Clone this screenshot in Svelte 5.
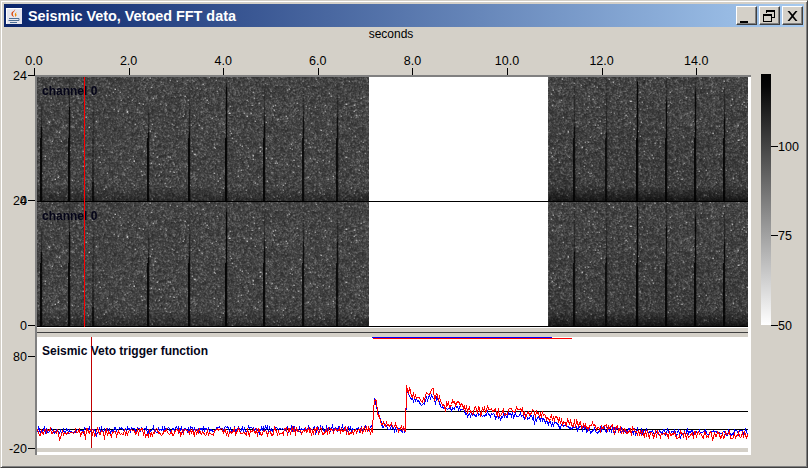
<script lang="ts">
	import { onMount } from 'svelte';

	const PLOT_W = 711;
	const PANEL_H = 124;

	let topCanvas: HTMLCanvasElement;
	let bottomCanvas: HTMLCanvasElement;

	const xTicks = ['0.0', '2.0', '4.0', '6.0', '8.0', '10.0', '12.0', '14.0'];
	const yTicks = [
		{ y: 0, label: '24' },
		{ y: 125, label: '24' },
		{ y: 125, label: '0' },
		{ y: 250, label: '0' },
		{ y: 281, label: '80' },
		{ y: 373, label: '-20' }
	];
	const barTicks = [
		{ y: 72, label: '100' },
		{ y: 161, label: '75' },
		{ y: 251, label: '50' }
	];

	// vetoed stretch of the spectrogram, in canvas pixels
	const GAP_FROM = 332;
	const GAP_TO = 511;

	// glitches: x on the page, row they fade in, row they turn solid, how dark
	const glitches = [
		[41, 30, 50, 0.85], [69, 0, 30, 0.85], [93, 25, 105, 0.75], [148, 30, 55, 0.85],
		[189, 10, 55, 0.85], [226, 0, 10, 0.9], [264, 10, 45, 0.85], [303, 5, 40, 0.8],
		[337, 10, 40, 0.8], [574, 0, 50, 0.8], [606, 0, 55, 0.75], [637, 0, 5, 0.9],
		[666, 0, 25, 0.85], [695, 0, 15, 0.85], [724, 10, 40, 0.85]
	];

	function rng(seed: number) {
		return () => {
			seed = (seed + 0x6d2b79f5) | 0;
			let t = Math.imul(seed ^ (seed >>> 15), 1 | seed);
			t = (t + Math.imul(t ^ (t >>> 7), 61 | t)) ^ t;
			return ((t ^ (t >>> 14)) >>> 0) / 4294967296;
		};
	}

	function drawSpectrum(canvas: HTMLCanvasElement) {
		const ctx = canvas.getContext('2d')!;
		const img = ctx.createImageData(PLOT_W, PANEL_H);
		const rand = rng(1207);
		const raw = new Float32Array((PLOT_W + 1) * (PANEL_H + 1));
		for (let i = 0; i < raw.length; i++) {
			const e = -Math.log(rand() + 0.0001) - Math.log(rand() + 0.0001);
			raw[i] = 38 + e * 16 + (rand() < 0.005 ? 170 : 0);
		}
		const stride = PLOT_W + 1;
		for (let y = 0; y < PANEL_H; y++) {
			for (let x = 0; x < PLOT_W; x++) {
				let v = 255;
				if (x < GAP_FROM || x >= GAP_TO) {
					const at = y * stride + x;
					v = raw[at] * 0.5 + raw[at + 1] * 0.2 + raw[at + stride] * 0.2 + raw[at + stride + 1] * 0.1;
					// low frequencies get dark at the foot of the panel
					const foot = Math.max(0, (y - PANEL_H + 16) / 16);
					v *= 1 - foot * (x > GAP_TO ? 0.65 : 0.4);
					if (x > GAP_TO) v *= 1 - (y / PANEL_H) * 0.12;
					for (const [gx, from, solid, dark] of glitches) {
						const d = x + 37 - gx;
						if (d < -1 || d > 1 || y < from) continue;
						const ramp = y >= solid ? 1 : 0.45 * ((y - from) / Math.max(1, solid - from)) + 0.2;
						const wide = d === 0 || (d === -1 && y > 60) ? 1 : 0.25;
						v *= 1 - dark * ramp * wide;
					}
				}
				const i = (y * PLOT_W + x) * 4;
				img.data[i] = img.data[i + 1] = img.data[i + 2] = Math.min(255, v);
				img.data[i + 3] = 255;
			}
		}
		ctx.putImageData(img, 0, 0);
	}

	// trigger function envelope, page coordinates
	const envelope = [
		[37, 431], [372, 429], [373, 412], [374, 397], [377, 410], [381, 423], [388, 427],
		[405, 430], [406, 389], [410, 393], [415, 396], [422, 401], [428, 393], [433, 392],
		[440, 401], [448, 406], [456, 403], [470, 411], [490, 410], [500, 414], [510, 410],
		[522, 412], [540, 415], [560, 422], [580, 425], [600, 428], [620, 430], [640, 431],
		[680, 432], [700, 432], [748, 432]
	];

	function level(x: number) {
		for (let i = 1; i < envelope.length; i++) {
			const [x0, y0] = envelope[i - 1];
			const [x1, y1] = envelope[i];
			if (x <= x1) return y0 + ((y1 - y0) * (x - x0)) / (x1 - x0);
		}
		return 432;
	}

	// one sample per pixel, tight band of noise with the odd deeper spike
	function trace(seed: number, shift: (x: number) => number, spread: number) {
		const rand = rng(seed);
		const pts: string[] = [];
		for (let x = 37; x < 748; x++) {
			const spike = rand() < 0.025 ? 4 : 0;
			const y = Math.round(level(x) + shift(x) + (rand() - 0.5) * spread + spike) - 337 + 0.5;
			pts.push(`${x - 37 + 0.5},${y}`);
		}
		return pts.join(' ');
	}

	const bluePoints = trace(31, (x) => (x > 406 && x < 600 ? 3.5 : x < 372 ? -1 : 0), 6);
	const redPoints = trace(77, (x) => (x < 372 ? 1.5 : x > 640 ? 2.5 : -1), 8);

	onMount(() => {
		drawSpectrum(topCanvas);
		drawSpectrum(bottomCanvas);
	});
</script>

<div class="window">
	<div class="titlebar">
		<svg class="java" viewBox="0 0 16 16" aria-hidden="true">
			<rect width="16" height="16" fill="#e6e6ee" />
			<path d="M0 0h16v1H1v15H0z" fill="#fff" />
			<path d="M9 1c1 2-3 3-2 6 .3 1 1 1.500 1 2-2-1-3-2-2.500-4C6 3.500 9 3 9 1z" fill="#d9480f" />
			<path d="M11 4c-2 1-2.500 2-2 3.500.2.700.2 1-.2 1.500 2-.800 2-2 1.400-3-.3-.700 0-1.300.8-2z" fill="#f08c00" />
			<path d="M3 10h8v1H3zM2.500 12h9v1h-9zM4 14h7v1H4z" fill="#4d6f94" />
			<path d="M11 10.500h2v2h-2" fill="none" stroke="#4d6f94" />
		</svg>
		<span class="title">Seismic Veto, Vetoed FFT data</span>
		<div class="buttons">
			<button aria-label="Minimize">
				<svg viewBox="0 0 17 15"><path d="M2 12h8v2H2z" /></svg>
			</button>
			<button aria-label="Restore">
				<svg viewBox="0 0 17 15">
					<path d="M5 1h9v8h-3V8h2V3H6v1H5zM2 5h9v8H2zM3 7v5h7V7z" fill-rule="evenodd" />
				</svg>
			</button>
			<button aria-label="Close">
				<svg viewBox="0 0 17 15">
					<path d="M3.500 2h2L8.500 5.500 11.500 2h2L9.500 7l4 5h-2L8.500 8.500 5.500 12h-2l4-5z" />
				</svg>
			</button>
		</div>
	</div>

	<div class="content">
		<div class="xlabel">seconds</div>

		<svg class="xaxis" width="716" height="34">
			{#each xTicks as label, i}
				<text x={-1 + i * 94.6} y="24" text-anchor="middle">{label}</text>
				<line x1={Math.round(i * 94.6) - 0.5} x2={Math.round(i * 94.6) - 0.5} y1="27" y2="34" />
			{/each}
		</svg>

		<svg class="yaxis" width="31" height="380">
			{#each yTicks as t}
				<text x="23" y={t.y + 5} text-anchor="end">{t.label}</text>
				<line x1="24" x2="31" y1={t.y + 0.5} y2={t.y + 0.5} />
			{/each}
		</svg>

		<div class="plots">
			<div class="spectra">
				<div class="panel">
					<canvas bind:this={topCanvas} width={PLOT_W} height={PANEL_H}></canvas>
					<span class="panel-label">channel 0</span>
				</div>
				<div class="panel">
					<canvas bind:this={bottomCanvas} width={PLOT_W} height={PANEL_H}></canvas>
					<span class="panel-label">channel 0</span>
				</div>
				<div class="cursor"></div>
			</div>

			<div class="divider"><div class="divider-line"></div></div>

			<div class="trigger">
				<svg width={PLOT_W} height="111">
					<line class="bar-red" x1="336" x2="535" y1="1.500" y2="1.500" />
					<line class="bar-blue" x1="335" x2="515" y1="0.500" y2="0.500" />
					<line class="level" x1="2" x2={PLOT_W} y1="74.500" y2="74.500" />
					<line class="level" x1="0" x2={PLOT_W} y1="92.500" y2="92.500" />
					<polyline class="blue" points={bluePoints} />
					<polyline class="red" points={redPoints} />
					<line class="trigger-cursor" x1="54.500" x2="54.500" y1="0" y2="111" />
				</svg>
				<span class="trigger-label">Seismic Veto trigger function</span>
			</div>
			<div class="strip"></div>
		</div>

		<svg class="colorbar" width="50" height="256">
			<defs>
				<linearGradient id="gray-ramp" x1="0" y1="0" x2="0" y2="1">
					<stop offset="0" stop-color="#000" />
					<stop offset="0.05" stop-color="#060606" />
					<stop offset="1" stop-color="#fff" />
				</linearGradient>
			</defs>
			<rect x="10" y="0" width="10" height="251" fill="url(#gray-ramp)" />
			{#each barTicks as t}
				<line x1="20" x2="27" y1={t.y + 0.5} y2={t.y + 0.5} />
				<text x="27" y={t.y + 5}>{t.label}</text>
			{/each}
		</svg>
	</div>
</div>

<style>
	:global(body) {
		margin: 0;
		background: #d4d0c8;
	}

	.window {
		box-sizing: border-box;
		width: 808px;
		height: 468px;
		padding: 3px;
		background: #d4d0c8;
		border: 1px solid;
		border-color: #d4d0c8 #404040 #404040 #d4d0c8;
		box-shadow: inset 1px 1px #fff, inset -1px -1px #808080;
		font-family: 'Liberation Sans', Arial, sans-serif;
		overflow: hidden;
	}

	.titlebar {
		display: flex;
		align-items: center;
		gap: 6px;
		height: 23px;
		padding: 0 1px 0 2px;
		background: linear-gradient(to right, #0a246a, #a6caf0);
	}

	.java {
		width: 16px;
		height: 16px;
		flex: none;
	}

	.title {
		color: #fff;
		font-size: 14.400px;
		font-weight: bold;
		white-space: nowrap;
	}

	.buttons {
		display: flex;
		gap: 2px;
		margin-left: auto;
	}

	.buttons button {
		box-sizing: border-box;
		width: 21px;
		height: 19px;
		padding: 0;
		background: #d4d0c8;
		border: 1px solid;
		border-color: #fff #404040 #404040 #fff;
		box-shadow: inset -1px -1px #808080;
	}

	.buttons svg {
		display: block;
		width: 17px;
		height: 15px;
		margin: 1px 0 0 1px;
		fill: #000;
	}

	.content {
		display: grid;
		grid-template-columns: 31px 716px 1fr;
		grid-template-rows: 14px 34px 1fr;
	}

	.xlabel {
		grid-column: 2;
		padding-right: 4px;
		font-size: 12px;
		line-height: 14px;
		text-align: center;
		color: #000;
	}

	svg text {
		font-size: 12.500px;
		fill: #000;
	}

	svg line {
		stroke: #000;
		stroke-width: 1;
		shape-rendering: crispEdges;
	}

	.xaxis {
		grid-column: 2;
		grid-row: 2;
		display: block;
		overflow: visible;
	}

	.yaxis {
		grid-column: 1;
		grid-row: 3;
		display: block;
		overflow: visible;
	}

	.plots {
		grid-column: 2;
		grid-row: 3;
		box-sizing: border-box;
		height: 380px;
		padding: 0 3px 3px 0;
		background: #fff;
		border-top: 2px solid #808080;
		border-left: 2px solid #808080;
	}

	.spectra {
		position: relative;
	}

	.panel {
		position: relative;
		height: 124px;
		border-bottom: 1px solid #000;
	}

	.panel canvas {
		display: block;
	}

	.panel-label {
		position: absolute;
		left: 5px;
		top: 7px;
		color: #050518;
		font-size: 12px;
		font-weight: bold;
		line-height: 14px;
	}

	.cursor {
		position: absolute;
		left: 47px;
		top: 0;
		bottom: 0;
		width: 1px;
		background: #f00;
	}

	.divider {
		box-sizing: border-box;
		height: 10px;
		padding-top: 4px;
		background: #d4d0c8;
		border-top: 1px solid #fff;
	}

	.divider-line {
		height: 1px;
		background: #404040;
	}

	.trigger {
		position: relative;
		height: 111px;
	}

	.trigger svg {
		display: block;
	}

	.trigger-label {
		position: absolute;
		left: 5px;
		top: 7px;
		color: #050518;
		font-size: 12px;
		font-weight: bold;
		line-height: 14px;
	}

	.blue,
	.red {
		fill: none;
		stroke-width: 1;
		shape-rendering: crispEdges;
	}

	.blue {
		stroke: #0000ff;
	}

	.red {
		stroke: #ff0000;
	}

	.bar-red {
		stroke: #ff0000;
	}

	.bar-blue {
		stroke: #0000ff;
	}

	.trigger-cursor {
		stroke: #c00000;
	}

	.strip {
		height: 4px;
		background: #d4d0c8;
	}

	.colorbar {
		grid-column: 3;
		grid-row: 3;
		display: block;
		margin-top: -1px;
		overflow: visible;
	}
</style>
